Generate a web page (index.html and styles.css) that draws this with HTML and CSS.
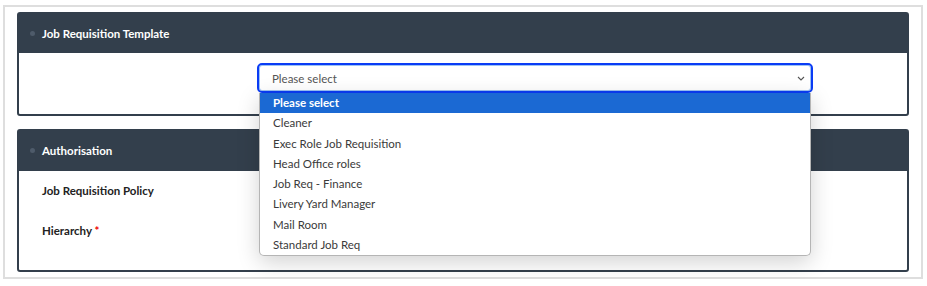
FILE: index.html
```html
<!DOCTYPE html>
<html lang="en">
<head>
    <meta charset="UTF-8">
    <meta name="viewport" content="width=device-width, initial-scale=1.0">
    <title>Job Requisition</title>
    <link rel="stylesheet" href="styles.css">
</head>
<body>
    <div class="frame">
        <div class="panel">
            <div class="panel-head"><span class="dot"></span>Job Requisition Template</div>
            <div class="panel-body">
                <div class="row">
                    <div class="label"></div>
                    <div class="field">
                        <div class="select">
                            <span>Please select</span>
                            <svg class="chevron" width="8" height="5" viewBox="0 0 8 5"><path d="M1 1l3 3 3-3" fill="none" stroke="#555" stroke-width="1.1"/></svg>
                        </div>
                        <ul class="options">
                            <li class="active">Please select</li>
                            <li>Cleaner</li>
                            <li>Exec Role Job Requisition</li>
                            <li>Head Office roles</li>
                            <li>Job Req - Finance</li>
                            <li>Livery Yard Manager</li>
                            <li>Mail Room</li>
                            <li>Standard Job Req</li>
                        </ul>
                    </div>
                </div>
            </div>
        </div>

        <div class="panel">
            <div class="panel-head tall"><span class="dot"></span>Authorisation</div>
            <div class="panel-body auth">
                <div class="row"><div class="label">Job Requisition Policy</div></div>
                <div class="row"><div class="label">Hierarchy <span class="req">*</span></div></div>
            </div>
        </div>
    </div>
</body>
</html>
```

FILE: styles.css
```css
body {
    margin: 5px 4px 0 3px;
    background-color: #fff;
    font-family: Lato, "Noto Sans", sans-serif;
    font-size: 11.5px;
    color: #333;
}
.frame {
    border: 2px solid #dedede;
    padding: 5px 12px;
    display: flex;
    flex-direction: column;
    gap: 13px;
}
.panel {
    border: 2px solid #333f4c;
    border-radius: 3px;
    background-color: #fff;
}
.panel-head {
    height: 38px;
    padding-bottom: 1px;
    background-color: #333f4c;
    color: #fff;
    font-weight: bold;
    display: flex;
    align-items: center;
    padding-left: 11px;
}
.panel-head.tall {
    height: 38px;
    padding-bottom: 2px;
}
.dot {
    width: 5px;
    height: 5px;
    border-radius: 50%;
    background-color: #4e5b6a;
    margin-right: 7px;
}
.panel-body {
    padding: 10px 94px 21px 23px;
}
.panel-body.auth {
    padding-top: 4px;
    padding-bottom: 25px;
    height: 70px;
    display: flex;
    flex-direction: column;
    gap: 10px;
}
.row {
    display: flex;
    align-items: center;
    min-height: 30px;
}
.label {
    width: 215px;
    font-weight: bold;
    color: #222;
}
.req {
    color: #e00;
}
.field {
    flex: 1;
    position: relative;
}
.select {
    height: 26px;
    border: 2px solid #0a3cf5;
    border-radius: 5px;
    box-shadow: inset 0 0 0 1px #9cc3f5;
    display: flex;
    align-items: center;
    justify-content: space-between;
    padding: 0 6px 0 13px;
    color: #555;
}
.chevron {
    margin-top: 1px;
}
.options {
    position: absolute;
    top: 30px;
    left: 2px;
    right: 2px;
    margin: 0;
    padding: 0;
    list-style: none;
    background-color: #fff;
    border: 1px solid #b5b5b5;
    border-top: none;
    border-radius: 0 0 5px 5px;
    box-shadow: 0 6px 22px rgba(0, 0, 0, 0.18);
    z-index: 2;
}
.options li {
    height: 20.25px;
    line-height: 20px;
    padding-left: 13px;
    color: #3a3a3a;
}
.options li.active {
    background-color: #1b69d3;
    color: #fff;
    font-weight: bold;
}
```
